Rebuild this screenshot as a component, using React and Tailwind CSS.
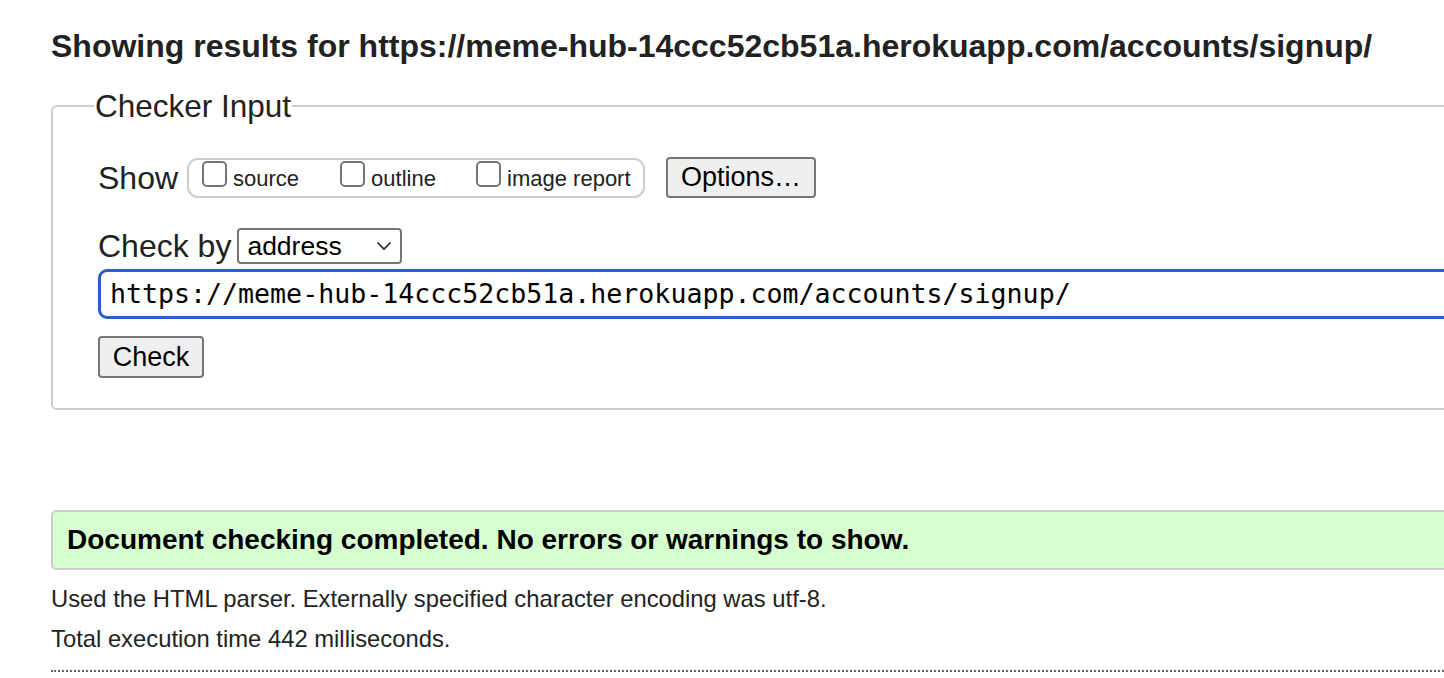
import React from 'react'

const sans = { fontFamily: '"Liberation Sans", Arial, sans-serif' }

const Box = ({ label }) => (
  <label className="flex items-center">
    <span className="-mt-[7px] inline-block h-[26px] w-[25px] rounded-[5px] border-2 border-[#767676] bg-white" />
    <span className="ml-[6px] mt-[3px] text-[22px] leading-none text-[#222]">{label}</span>
  </label>
)

export default function App() {
  return (
    <div className="h-[678px] w-[1444px] overflow-hidden bg-white text-[#222]" style={sans}>
      <div className="w-[1520px] pl-[51px]">
        <h2 className="pt-[26px] text-[32px] font-bold leading-[40px] text-[#222]">
          Showing results for https://meme-hub-14ccc52cb51a.herokuapp.com/accounts/signup/
        </h2>

        <fieldset className="mt-[24px] h-[320px] rounded-[6px] border-2 border-[#cdcdcd] pl-[45px]">
          <legend className="-ml-[4px] px-[1px] text-[31.5px] leading-[32px] text-[#222]">Checker Input</legend>

          <div className="mt-[35px] flex h-[41px] items-center">
            <span className="text-[32px] leading-none">Show</span>
            <div className="ml-[9px] flex h-[40px] w-[458px] items-center rounded-[11px] border-2 border-[#cdcdcd] pl-[13px]">
              <div className="w-[138px]"><Box label="source" /></div>
              <div className="w-[136px]"><Box label="outline" /></div>
              <Box label="image report" />
            </div>
            <button className="ml-[21px] h-[41px] w-[150px] rounded-[4px] border-2 border-[#767676] bg-[#efefef] text-[27px] leading-none text-black">
              Options…
            </button>
          </div>

          <div className="mt-[30px] flex h-[36px] items-center">
            <span className="text-[32px] leading-none">Check by</span>
            <div className="ml-[6px] flex h-[36px] w-[165px] items-center justify-between rounded-[4px] border-2 border-[#767676] bg-white pl-[8px] pr-[8px]">
              <span className="text-[26.5px] leading-none text-black">address</span>
              <svg width="16" height="10" viewBox="0 0 16 10" fill="none">
                <path d="M1.5 1.5 L8 8 L14.5 1.5" stroke="#222" strokeWidth="1.6" />
              </svg>
            </div>
          </div>

          <div className="mt-[5px] flex h-[50px] items-center rounded-[9px] border-[3px] border-[#2a5fc9] pl-[9px]">
            <span
              className="text-[26.6px] leading-none text-black"
              style={{ fontFamily: '"DejaVu Sans Mono", "Liberation Mono", monospace' }}
            >
              https://meme-hub-14ccc52cb51a.herokuapp.com/accounts/signup/
            </span>
          </div>

          <button className="mt-[17px] h-[42px] w-[106px] rounded-[4px] border-2 border-[#767676] bg-[#efefef] text-[27px] leading-none text-black">
            Check
          </button>
        </fieldset>

        <div className="mt-[100px] flex h-[60px] items-center rounded-[5px] border-2 border-[#cdcdcd] bg-[#d7fed0] pl-[14px]">
          <span className="text-[28px] font-bold leading-none text-black">
            Document checking completed. No errors or warnings to show.
          </span>
        </div>

        <p className="mt-[17px] text-[23.8px] leading-[24px] text-[#222]">
          Used the HTML parser. Externally specified character encoding was utf-8.
        </p>
        <p className="mt-[16px] text-[23.8px] leading-[24px] text-[#222]">Total execution time 442 milliseconds.</p>
        <div className="mt-[19px] border-t-2 border-dotted border-[#666]" />
      </div>
    </div>
  )
}
